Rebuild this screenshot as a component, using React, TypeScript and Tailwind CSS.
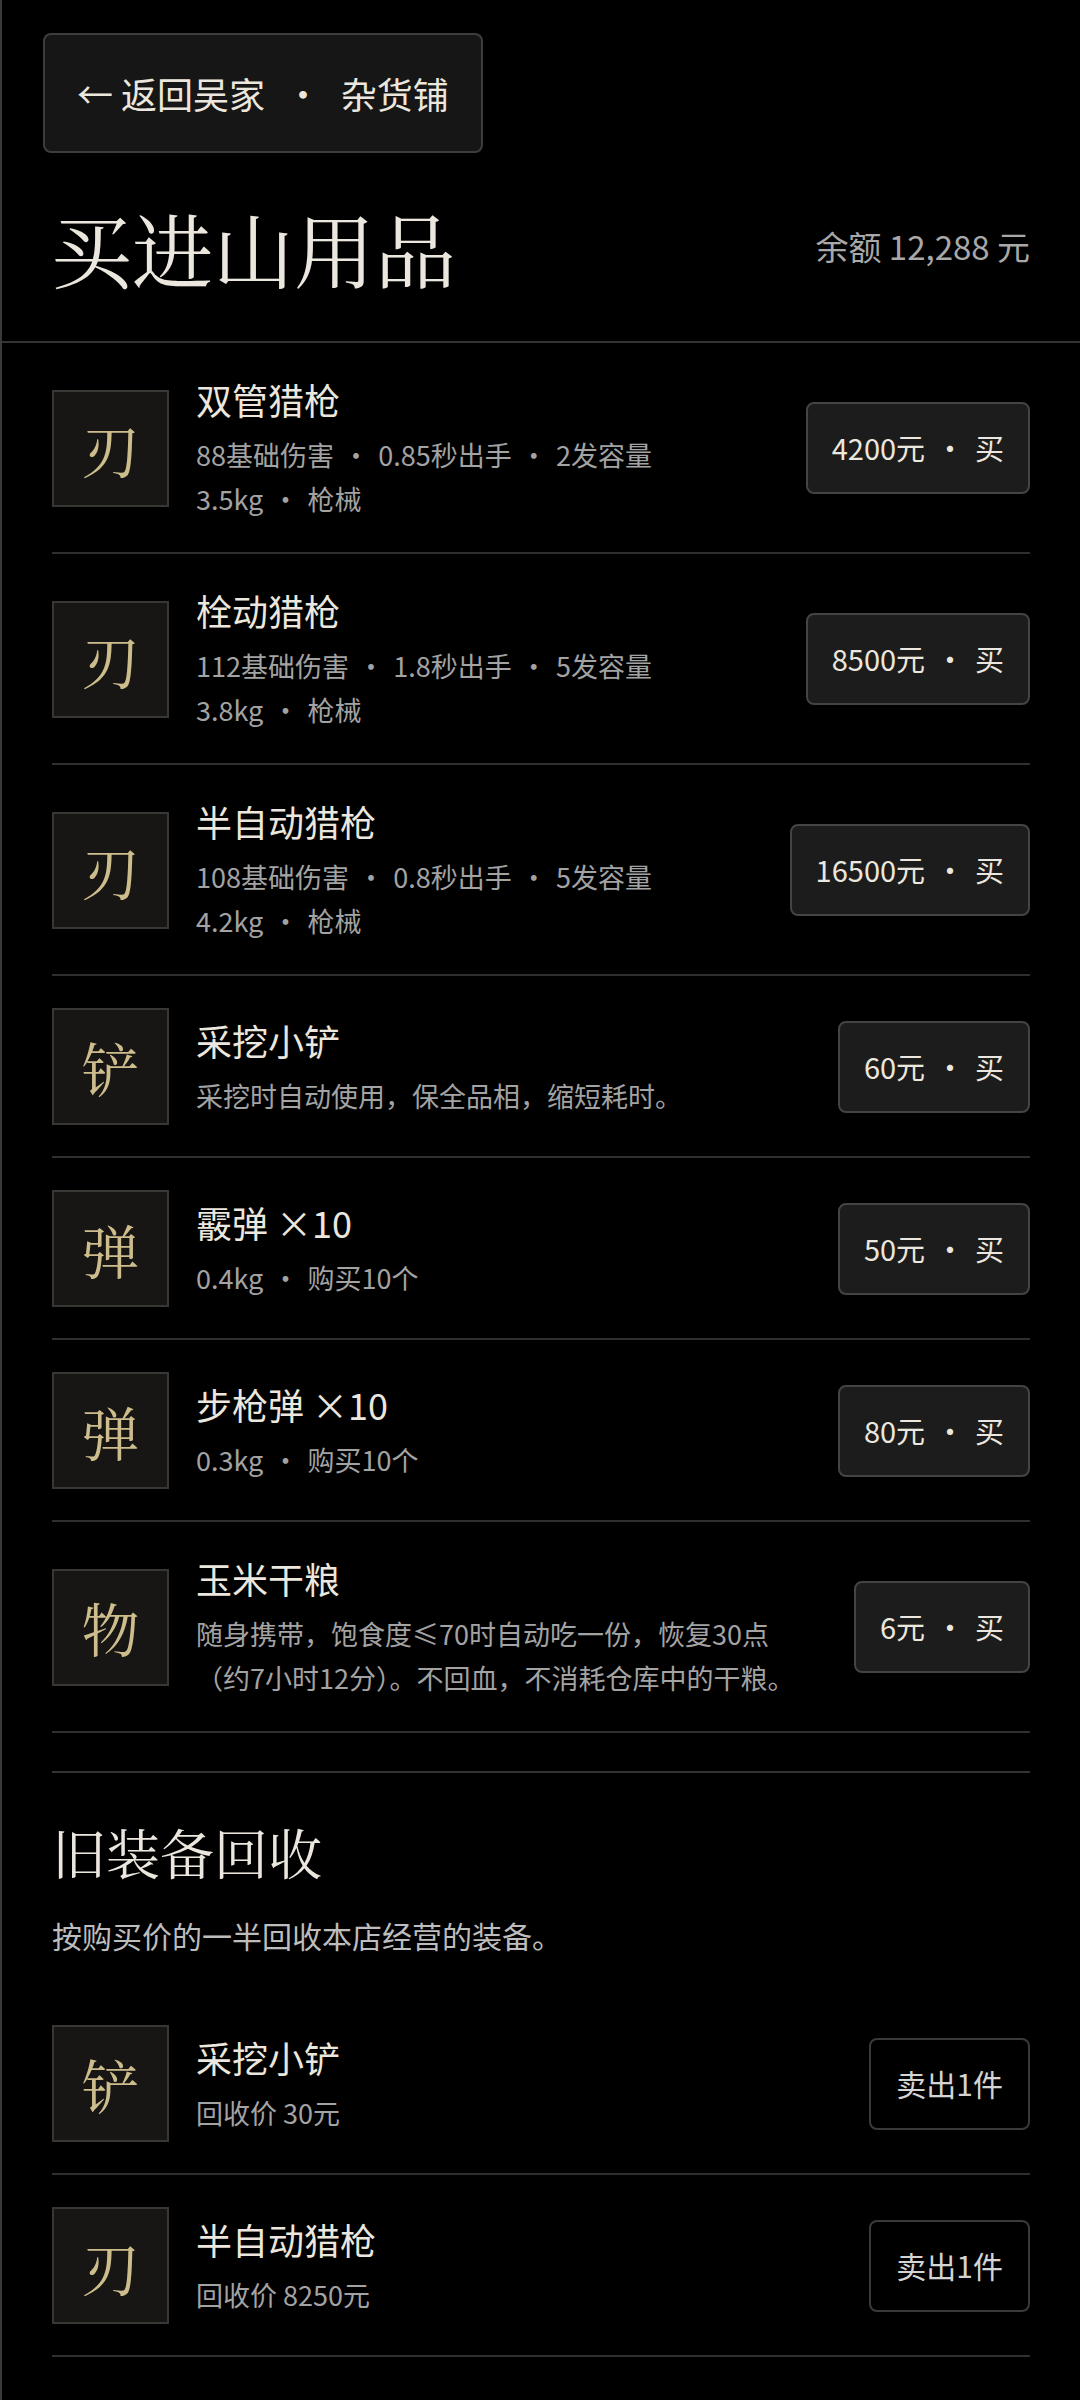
import type { ReactNode } from "react";

const sans = "font-['Noto_Sans_CJK_SC','Noto_Sans',sans-serif]";
const serif = "font-['Noto_Serif_CJK_SC','Noto_Serif_CJK_JP','Liberation_Serif','Noto_Sans_CJK_SC',serif]";

type Item = {
  glyph: string;
  name: string;
  lines: ReactNode[];
  price: string;
};

// separator dot, spacing differs a bit between header / list / buttons
function Dot({ className = "mx-[0.32em]" }: { className?: string }) {
  return <span className={className}>·</span>;
}

const shopItems: Item[] = [
  {
    glyph: "刃",
    name: "双管猎枪",
    lines: [
      <>88基础伤害<Dot />0.85秒出手<Dot />2发容量</>,
      <>3.5kg<Dot />枪械</>,
    ],
    price: "4200元",
  },
  {
    glyph: "刃",
    name: "栓动猎枪",
    lines: [
      <>112基础伤害<Dot />1.8秒出手<Dot />5发容量</>,
      <>3.8kg<Dot />枪械</>,
    ],
    price: "8500元",
  },
  {
    glyph: "刃",
    name: "半自动猎枪",
    lines: [
      <>108基础伤害<Dot />0.8秒出手<Dot />5发容量</>,
      <>4.2kg<Dot />枪械</>,
    ],
    price: "16500元",
  },
  {
    glyph: "铲",
    name: "采挖小铲",
    lines: [<>采挖时自动使用，保全品相，缩短耗时。</>],
    price: "60元",
  },
  {
    glyph: "弹",
    name: "霰弹 ×10",
    lines: [<>0.4kg<Dot />购买10个</>],
    price: "50元",
  },
  {
    glyph: "弹",
    name: "步枪弹 ×10",
    lines: [<>0.3kg<Dot />购买10个</>],
    price: "80元",
  },
  {
    glyph: "物",
    name: "玉米干粮",
    lines: [
      <>
        随身携带，饱食度≤70时自动吃一份，恢复30点
        <br />
        （约7小时12分）。不回血，不消耗仓库中的干粮。
      </>,
    ],
    price: "6元",
  },
];

const sellItems = [
  { glyph: "铲", name: "采挖小铲", price: "回收价 30元" },
  { glyph: "刃", name: "半自动猎枪", price: "回收价 8250元" },
];

function GlyphBox({ glyph }: { glyph: string }) {
  return (
    <div className="flex h-[117px] w-[117px] shrink-0 items-center justify-center border-2 border-[#383734] bg-[#171614]">
      <span className={`${serif} text-[58px] leading-none text-[#cdbd8c]`}>{glyph}</span>
    </div>
  );
}

function Row({ glyph, title, children, action }: { glyph: string; title: string; children: ReactNode; action: ReactNode }) {
  return (
    <div className="flex items-center gap-[27px] border-b-2 border-[#2f2f2f] pt-[32px] pb-[31px]">
      <GlyphBox glyph={glyph} />
      <div className="min-w-0 flex-1">
        <div className="text-[36px] leading-[48px] text-[#ece7de]">{title}</div>
        <div className="mt-[10px] text-[27px] leading-[44px] text-[#a3a3a3]">{children}</div>
      </div>
      {action}
    </div>
  );
}

export default function App() {
  return (
    <div className={`${sans} min-h-[2400px] border-l-2 border-[#3a3a3a] bg-black`}>
      <header className="border-b-2 border-[#333] px-[41px] pt-[33px] pb-[46px]">
        <button className="flex h-[120px] items-center rounded-[8px] border-2 border-[#3d3d3d] bg-[#161616] px-[32px] text-[36px] text-[#ece7de]">
          ← 返回吴家<Dot className="mx-[0.55em]" />杂货铺
        </button>
        <div className="mt-[46px] flex items-center justify-between pl-[8px] pr-[9px]">
          <h1 className={`${serif} text-[81px] leading-[96px] text-[#ece7de]`}>买进山用品</h1>
          <div className="text-[33px] text-[#a8a8a8]">余额 12,288 元</div>
        </div>
      </header>

      <main className="pl-[50px] pr-[50px]">
        <section>
          {shopItems.map((it) => (
            <Row
              key={it.name}
              glyph={it.glyph}
              title={it.name}
              action={
                <button className="flex h-[92px] shrink-0 items-center rounded-[8px] border-2 border-[#444] bg-[#1c1c1c] px-[24px] text-[29px] text-[#ece7de]">
                  {it.price}
                  <Dot className="mx-[0.36em]" />买
                </button>
              }
            >
              {it.lines.map((l, i) => (
                <div key={i}>{l}</div>
              ))}
            </Row>
          ))}
        </section>

        <section className="mt-[38px] border-t-2 border-[#333] pt-[43px]">
          <h2 className={`${serif} text-[54px] leading-[72px] text-[#ece7de]`}>旧装备回收</h2>
          <p className="mt-[27px] text-[30px] leading-[40px] text-[#bdbdbd]">按购买价的一半回收本店经营的装备。</p>
          <div className="mt-[38px]">
            {sellItems.map((it) => (
              <Row
                key={it.name}
                glyph={it.glyph}
                title={it.name}
                action={
                  <button className="flex h-[92px] shrink-0 items-center rounded-[8px] border-2 border-[#3a3a3a] bg-black px-[25px] text-[30px] text-[#d4d4d4]">
                    卖出1件
                  </button>
                }
              >
                {it.price}
              </Row>
            ))}
          </div>
        </section>
      </main>
    </div>
  );
}
